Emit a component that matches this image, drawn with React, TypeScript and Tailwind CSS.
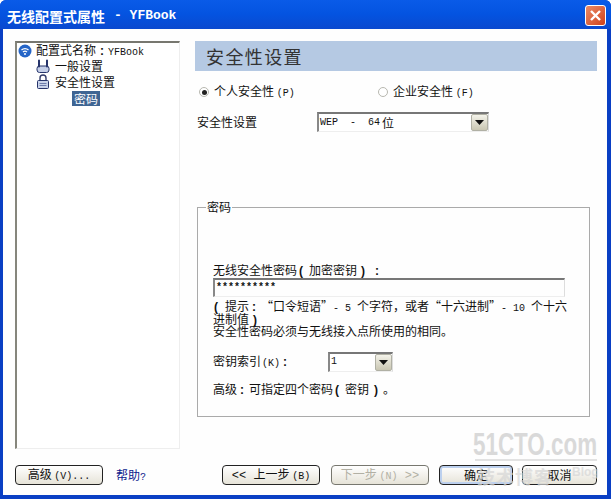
const cjk = { fontFamily: '"Noto Sans CJK SC", "Liberation Sans", sans-serif' };

function L({ children, cls = "" }: { children: React.ReactNode; cls?: string }) {
  return <span className={`font-['Liberation_Mono',monospace] text-[10px] leading-[10px] whitespace-pre ${cls}`}>{children}</span>;
}

function Cell({ children, cls = "" }: { children: React.ReactNode; cls?: string }) {
  return <span className={`inline-block w-[12px] font-['Liberation_Sans',sans-serif] font-bold leading-[12px] ${cls}`}>{children}</span>;
}

function Arrow() {
  return (
    <div className="flex h-full w-[17px] items-center justify-center rounded-[2px] border border-[#b0b0a4] bg-gradient-to-b from-[#f4f3ea] to-[#c9c6b2]">
      <svg width="9" height="5" viewBox="0 0 9 5"><path d="M0 0h9L4.5 5z" fill="#111" /></svg>
    </div>
  );
}

function Select({ w, children }: { w: string; children: React.ReactNode }) {
  return (
    <div className={`flex h-[20px] items-stretch justify-between border-t-2 border-l-2 border-t-[#777] border-l-[#888] border-r border-b border-r-[#ddd] border-b-[#eee] bg-white pl-[1px] ${w}`}>
      <div className="flex items-center text-[#111]">{children}</div>
      <Arrow />
    </div>
  );
}

function Radio({ on }: { on?: boolean }) {
  return (
    <span className="flex h-[10px] w-[10px] items-center justify-center rounded-full border border-[#b8b8b0] bg-white">
      {on && <span className="h-[5px] w-[5px] rounded-full bg-[#222]" />}
    </span>
  );
}

function Btn({ w, children, cls = "" }: { w: string; children: React.ReactNode; cls?: string }) {
  return (
    <div className={`flex h-[20px] items-center justify-center rounded-[4px] border border-[#222] bg-gradient-to-b from-white to-[#e6e3d8] text-[12px] ${w} ${cls}`}>
      {children}
    </div>
  );
}

export default function App() {
  return (
    <div style={cjk} className="relative flex h-[499px] w-[611px] flex-col overflow-hidden rounded-t-[6px] bg-[#0a3fc4] text-[12px] leading-[12px] text-[#111]">
      <div className="flex h-[29px] shrink-0 items-center justify-between bg-gradient-to-b from-[#0a5be8] via-[#0453e0] to-[#0a49cf] pl-[7px] pr-[5px] pt-[2px]">
        <div className="flex items-center text-[14px] font-bold text-white">
          <span>无线配置式属性</span>
          <span className="ml-[9px] whitespace-pre font-['Liberation_Mono',monospace] text-[13px]">- YFBook</span>
        </div>
        <div className="flex h-[21px] w-[21px] items-center justify-center rounded-[3px] border border-white bg-gradient-to-br from-[#e98a66] to-[#cf3f15]">
          <svg width="13" height="13" viewBox="0 0 13 13"><path d="M2 2l9 9M11 2l-9 9" stroke="#fff" strokeWidth="2.4" /></svg>
        </div>
      </div>

      <div className="mb-[4px] ml-[3px] mr-[4px] flex min-h-0 flex-1 flex-col bg-[#fefefe] pt-[12px]">
        <div className="flex h-[414px] shrink-0 pl-[12px] pr-[10px]">
          <div className="flex h-[408px] w-[165px] shrink-0 flex-col border-t-2 border-l-2 border-t-[#77776f] border-l-[#86867c] border-r border-b border-r-[#eee] border-b-[#eee] bg-white pl-[1px]">
            <div className="flex h-[15px] items-center">
              <svg width="14" height="14" viewBox="0 0 14 14">
                <circle cx="7" cy="7" r="6.5" fill="#2565c7" />
                <path d="M3.5 6a5 5 0 0 1 7 0M5 8a3 3 0 0 1 4 0" stroke="#fff" strokeWidth="1.2" fill="none" />
                <circle cx="7" cy="10" r="1" fill="#fff" />
              </svg>
              <span className="ml-[4px]">配置式名称<Cell cls="pl-[4px]">:</Cell><L>YFBook</L></span>
            </div>
            <div className="flex h-[16px] items-center pl-[18px]">
              <svg width="14" height="15" viewBox="0 0 14 15">
                <rect x="1" y="7" width="12" height="6.5" rx="2.5" fill="#c5cfe8" stroke="#26346b" />
                <path d="M3 1.5v6M11 1.5v6" stroke="#26346b" strokeWidth="2" strokeLinecap="round" />
              </svg>
              <span className="ml-[5px]">一般设置</span>
            </div>
            <div className="flex h-[15px] items-center pl-[18px]">
              <svg width="14" height="15" viewBox="0 0 14 15">
                <path d="M4 7V4a3 3 0 0 1 6 0v3" stroke="#333c6b" strokeWidth="1.4" fill="none" />
                <rect x="1.5" y="6.5" width="11" height="8" rx="1" fill="#c9d3ea" stroke="#26346b" />
                <path d="M3.5 9.5h7M3.5 11.5h7" stroke="#6d7cab" />
              </svg>
              <span className="ml-[5px]">安全性设置</span>
            </div>
            <div className="mt-[2px] pl-[54px]">
              <span className="inline-flex h-[15px] w-[28px] items-center justify-center bg-[#3f6593] text-white">密码</span>
            </div>
          </div>

          <div className="ml-[15px] flex min-w-0 flex-1 flex-col">
            <div className="flex h-[30px] shrink-0 items-center bg-[#b5c9e3] pb-[1px] pl-[11px] text-[18px] tracking-[1.4px] text-[#333]">安全性设置</div>

            <div className="mt-[14px] flex h-[14px] items-center pl-[4px]">
              <Radio on />
              <span className="ml-[5px] w-[164px] whitespace-nowrap">个人安全性 <L>(P)</L></span>
              <Radio />
              <span className="ml-[5px] whitespace-nowrap">企业安全性 <L>(F)</L></span>
            </div>

            <div className="mt-[13px] flex items-center pl-[2px]">
              <span className="w-[120px]">安全性设置</span>
              <Select w="w-[172px]">
                <span className="flex items-center"><L cls="mr-[2px]">WEP  -  64</L><span>位</span></span>
              </Select>
            </div>

            <fieldset className="ml-[2px] mt-[68px] h-[217px] w-[393px] border border-[#aaa] pl-[15px] pr-[20px]">
              <legend className="ml-[-7px] px-[1px] leading-[14px]">密码</legend>
              <div className="mt-[50px] h-[12px] whitespace-nowrap leading-[12px]">无线安全性密码<Cell cls="pl-[2px]">(</Cell>加密密钥<Cell cls="pl-[4px]">)</Cell><Cell cls="pl-[6px]">:</Cell></div>
              <div className="mt-[2px] flex h-[19px] w-[352px] items-center border-t-2 border-l-2 border-t-[#777] border-l-[#888] border-r border-b border-r-[#ddd] border-b-[#eee] pl-[1px] font-['Liberation_Mono',monospace] text-[10px] font-bold">**********</div>
              <div className="mt-[3px] w-[356px] whitespace-nowrap leading-[12.5px]">
                <div className="h-[12.5px]"><Cell cls="pl-[1px]">(</Cell>提示<Cell cls="pl-[3px]">:</Cell>“口令短语”<L>- 5 </L>个字符，或者“十六进制”<L>- 10 </L>个十六</div>
                <div className="h-[12.5px]">进制值<Cell cls="pl-[4px]">)</Cell></div>
                <div className="h-[12.5px]">安全性密码必须与无线接入点所使用的相同。</div>
              </div>
              <div className="mt-[14px] flex items-center">
                <span className="w-[115px] whitespace-nowrap">密钥索引<L cls="ml-[1px]">(K)</L><Cell cls="pl-[3px]">:</Cell></span>
                <Select w="w-[65px]"><L>1</L></Select>
              </div>
              <div className="mt-[11px] whitespace-nowrap">高级<Cell cls="pl-[3px]">:</Cell>可指定四个密码<Cell cls="pl-[2px]">(</Cell>密钥<Cell cls="pl-[5px]">)</Cell><span className="ml-[2px]">。</span></div>
            </fieldset>
          </div>
        </div>

        <div className="flex h-[40px] shrink-0 items-start pl-[12px] pr-[10px] pt-[10px]">
          <Btn w="w-[88px]"><span>高级 <L>(V)...</L></span></Btn>
          <span className="ml-[13px] mt-[4px] text-[#0b1a8c]">帮助<L>?</L></span>
          <div className="ml-auto flex">
            <Btn w="w-[98px]"><span><L cls="text-[12px]">&lt;&lt; </L>上一步 <L>(B)</L></span></Btn>
            <Btn w="w-[98px]" cls="ml-[11px] text-[#b2b0a4] border-[#77776f]"><span>下一步 <L>(N)</L><L cls="text-[12px]"> &gt;&gt;</L></span></Btn>
            <Btn w="w-[74px]" cls="ml-[10px] shadow-[inset_0_0_0_2px_#bcd0ee]">确定</Btn>
            <Btn w="w-[75px]" cls="ml-[9px]">取消</Btn>
          </div>
        </div>
      </div>

      <div className="pointer-events-none absolute left-[473px] top-[427px] origin-left scale-x-[0.7] whitespace-nowrap font-['Liberation_Sans',sans-serif] text-[32px] font-bold leading-[34px] text-[#d6d6d6] opacity-90">51CTO.com</div>
      <div className="pointer-events-none absolute left-[475px] top-[459px] h-[2px] w-[122px] bg-[#e2e2e2]" />
      <div className="pointer-events-none absolute left-[477px] top-[465px] flex items-start text-[18px] font-bold leading-[22px] tracking-[1px] text-[#d6d6d6] opacity-70">
        技术博客<span className="ml-[19px] font-['Liberation_Sans',sans-serif] text-[12px] leading-[14px] tracking-normal">Blog</span>
      </div>
    </div>
  );
}
